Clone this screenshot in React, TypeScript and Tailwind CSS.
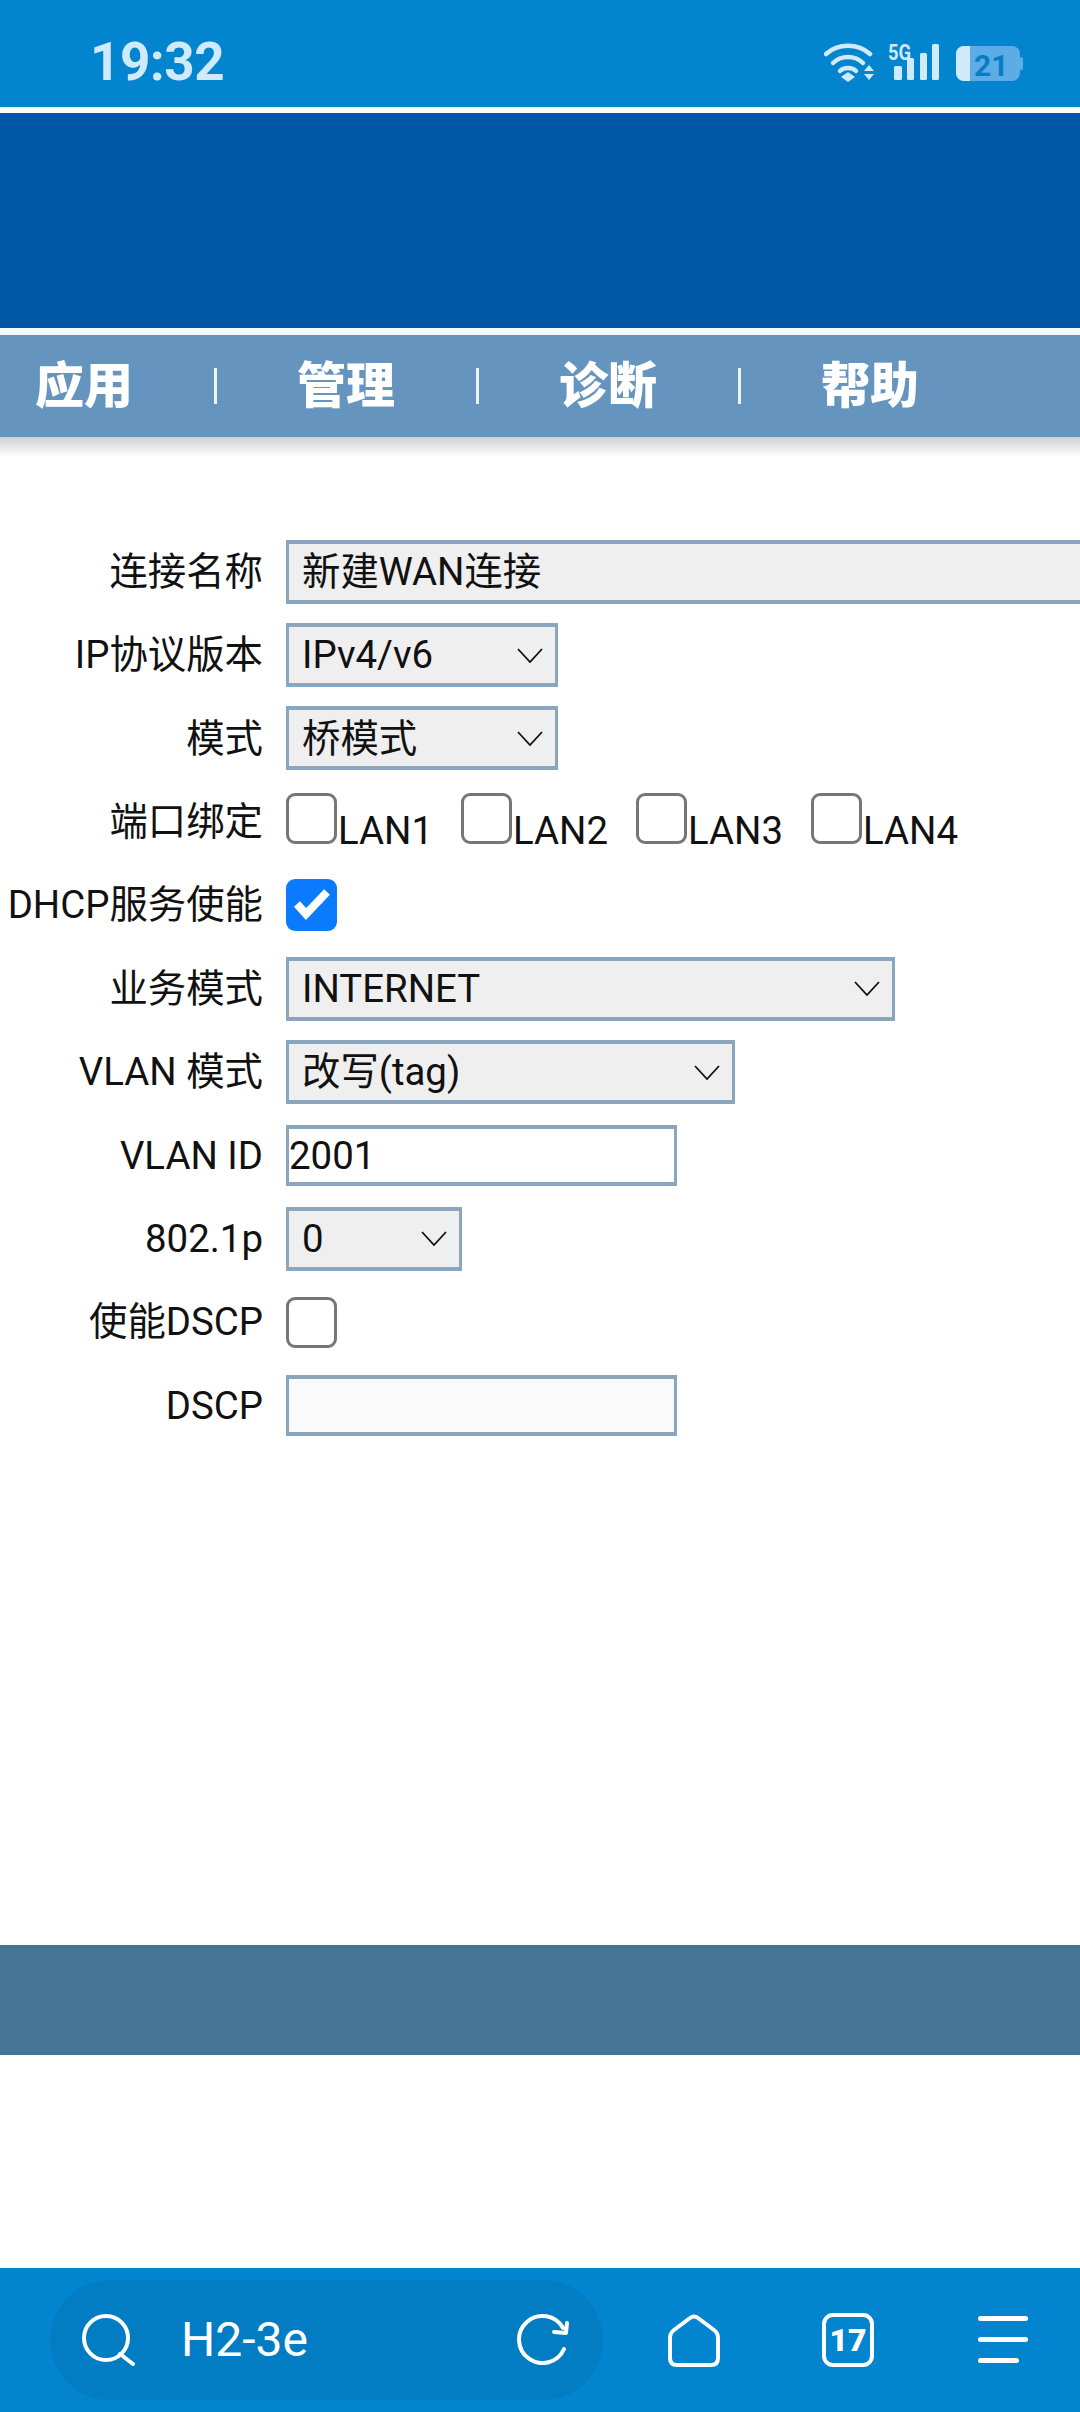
import React from "react";

const labelFont = "font-['Roboto','Noto_Sans_CJK_SC',sans-serif]";

function Chevron() {
  return (
    <svg width="26" height="15" viewBox="0 0 26 15" fill="none" className="shrink-0">
      <path d="M1 1 L13 14 L25 1" stroke="#111" strokeWidth="1.8" />
    </svg>
  );
}

function Select({ value, w }: { value: string; w: string }) {
  return (
    <div className={`${w} h-[64px] flex items-center justify-between pl-[13px] pr-[12px] bg-[#efefef] border-[3px] border-t-4 border-b-4 border-[#8aa6bf]`}>
      <span>{value}</span>
      <Chevron />
    </div>
  );
}

function Box({ checked }: { checked?: boolean }) {
  if (checked) {
    return (
      <div className="w-[51px] h-[52px] rounded-[9px] bg-[#0a7aff] shrink-0">
        <svg width="51" height="52" viewBox="0 0 51 52" fill="none">
          <path d="M11 25 L20 35 L41 13" stroke="#fff" strokeWidth="8" />
        </svg>
      </div>
    );
  }
  return <div className="w-[51px] h-[51px] rounded-[9px] border-[3px] border-[#767676] bg-white shrink-0" />;
}

function Row({ label, children }: { label: string; children: React.ReactNode }) {
  return (
    <div className="h-[83.4px] flex items-center">
      <div className="w-[263px] text-right whitespace-pre shrink-0">{label}</div>
      <div className="ml-[23px] flex items-center">{children}</div>
    </div>
  );
}

function StatusIcons() {
  return (
    <svg width="204" height="46" viewBox="0 -4 204 46" fill="none" className="shrink-0">
      <g stroke="#cfeafc" strokeWidth="4.5" strokeLinecap="round">
        <path d="M2 10 C 14 -1, 34 -1, 46 10" />
        <path d="M9 19 C 17 11, 31 11, 39 19" />
        <path d="M16 27 C 20 23, 28 23, 32 27" />
      </g>
      <path d="M24 28 L31 33 L24 38 L17 33 Z" fill="#cfeafc" />
      <path d="M45 21 L50 27 L40 27 Z M40 30 L50 30 L45 36 Z" fill="#cfeafc" />
      <text x="64" y="16" fontFamily="Roboto" fontWeight="700" fontSize="22" fill="#cfeafc" textLength="23" lengthAdjust="spacingAndGlyphs">5G</text>
      <rect x="70" y="22" width="8" height="14" rx="1.5" fill="#cfeafc" />
      <rect x="83" y="14" width="7" height="22" rx="1.5" fill="#cfeafc" />
      <rect x="96" y="9" width="7" height="27" rx="1.5" fill="#cfeafc" />
      <rect x="108" y="0" width="7" height="36" rx="1.5" fill="#cfeafc" />
      <rect x="132" y="2" width="64" height="35" rx="8" fill="#5cade6" />
      <path d="M140 2 H146 V37 H140 A8 8 0 0 1 132 29 V10 A8 8 0 0 1 140 2 Z" fill="#cfeafc" />
      <rect x="196" y="13" width="3" height="13" rx="1.5" fill="#5cade6" />
      <text x="150" y="32" fontFamily="Roboto" fontWeight="700" fontSize="30" fill="#0b7cc4">21</text>
    </svg>
  );
}

function Nav({ label, sep }: { label: string; sep?: boolean }) {
  return (
    <div className="w-[262px] shrink-0 flex items-center pl-[35px]">
      <span className="w-[98px] text-[49px] leading-none font-black text-white">{label}</span>
      {sep && <div className="ml-[81px] w-[3px] h-[36px] bg-[#eef4fa]" />}
    </div>
  );
}

export default function App() {
  return (
    <div className={`w-[1080px] h-[2412px] flex flex-col overflow-hidden bg-white text-[38.4px] text-[#111] ${labelFont}`}>
      <div className="h-[107px] shrink-0 bg-[#0284cf] flex items-start justify-between pl-[90px] pr-[52px]">
        <span className="mt-[32px] text-[53px] leading-[60px] font-bold tracking-[-0.5px] text-[#cfeafc]">19:32</span>
        <div className="mt-[40px]"><StatusIcons /></div>
      </div>
      <div className="h-[6px] shrink-0 bg-white" />
      <div className="h-[215px] shrink-0 bg-[#0058a6]" />
      <div className="h-[7px] shrink-0 bg-[#f2faff]" />
      <div className="h-[102px] shrink-0 bg-[#6595bf] flex">
        <Nav label="应用" sep />
        <Nav label="管理" sep />
        <Nav label="诊断" sep />
        <Nav label="帮助" />
      </div>
      <div className="h-[20px] shrink-0 bg-gradient-to-b from-[#cfd1cd] to-white" />
      <div className="pt-[73px] h-[1488px] shrink-0">
        <Row label="连接名称">
          <div className="w-[900px] h-[64px] flex items-center pl-[13px] bg-[#efefef] border-[3px] border-t-4 border-b-4 border-[#8aa6bf]">新建WAN连接</div>
        </Row>
        <Row label="IP协议版本"><Select value="IPv4/v6" w="w-[272px]" /></Row>
        <Row label="模式"><Select value="桥模式" w="w-[272px]" /></Row>
        <Row label="端口绑定">
          <div className="flex">
            {["LAN1", "LAN2", "LAN3", "LAN4"].map((l) => (
              <div key={l} className="w-[175px] flex items-baseline leading-none">
                <Box />
                <span className="ml-[1px]">{l}</span>
              </div>
            ))}
          </div>
        </Row>
        <Row label="DHCP服务使能"><Box checked /></Row>
        <Row label="业务模式"><Select value="INTERNET" w="w-[609px]" /></Row>
        <Row label="VLAN 模式"><Select value="改写(tag)" w="w-[449px]" /></Row>
        <Row label="VLAN ID">
          <div className="w-[391px] h-[61px] flex items-center bg-white border-[3px] border-t-4 border-b-4 border-[#8aa6bf]">2001</div>
        </Row>
        <Row label="802.1p"><Select value="0" w="w-[176px]" /></Row>
        <Row label="使能DSCP"><Box /></Row>
        <Row label="DSCP">
          <div className="w-[391px] h-[61px] bg-[#fafafa] border-[3px] border-t-4 border-b-4 border-[#8aa6bf]" />
        </Row>
      </div>
      <div className="h-[110px] shrink-0 bg-[#457696]" />
      <div className="flex-1" />
      <div className="h-[144px] shrink-0 bg-[#0284cf] flex items-start">
        <div className="ml-[50px] mt-[12px] w-[553px] h-[120px] rounded-[60px] bg-[#027dc3] flex items-center text-white">
          <svg width="54" height="56" viewBox="0 0 54 56" fill="none" className="ml-[31px] shrink-0">
            <circle cx="25" cy="26" r="22" stroke="#fff" strokeWidth="4" />
            <path d="M39 42 L52 52" stroke="#fff" strokeWidth="4" strokeLinecap="round" />
          </svg>
          <span className="ml-[46px] text-[48px] font-normal leading-none">H2-3e</span>
          <svg width="54" height="54" viewBox="0 0 54 54" fill="none" className="ml-[auto] mr-[33px] shrink-0">
            <path d="M48 36 A23.5 23.5 0 1 1 47 15" stroke="#fff" strokeWidth="4" strokeLinecap="round" />
            <path d="M38 19 L50 20 L51 10" stroke="#fff" strokeWidth="4" strokeLinecap="round" strokeLinejoin="round" />
          </svg>
        </div>
        <svg width="52" height="53" viewBox="0 0 52 53" fill="none" className="ml-[65px] mt-[46px] shrink-0">
          <path d="M22 4 Q26 1 30 4 L46 16 Q50 19 50 24 V44 Q50 51 43 51 H9 Q2 51 2 44 V24 Q2 19 6 16 Z" stroke="#fff" strokeWidth="4" strokeLinejoin="round" />
        </svg>
        <div className="ml-[102px] mt-[45px] w-[52px] h-[54px] rounded-[11px] border-[4px] border-white flex items-center justify-center text-white text-[32px] font-black leading-none shrink-0">17</div>
        <div className="ml-[104px] mt-[48px] flex flex-col gap-[16px] w-[50px] shrink-0">
          <div className="h-[5px] rounded-full bg-white" />
          <div className="h-[5px] rounded-full bg-white" />
          <div className="h-[5px] rounded-full bg-white w-[41px]" />
        </div>
      </div>
    </div>
  );
}
